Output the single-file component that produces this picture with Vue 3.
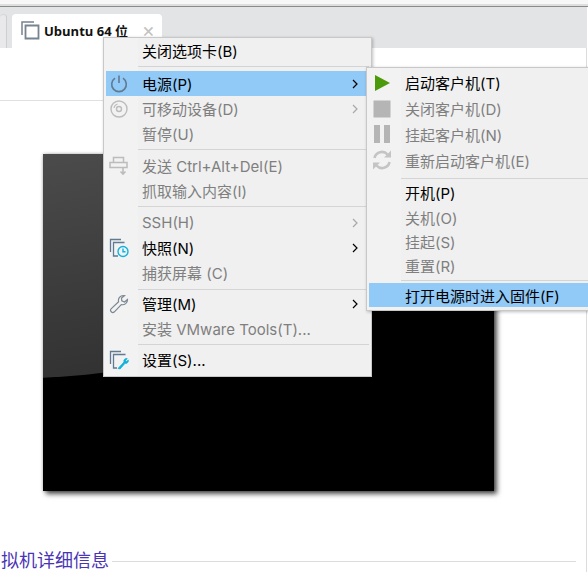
<template>
  <div class="page">
    <div class="top-strip"></div>
    <div class="tabbar">
      <div class="tab tab-prev"></div>
      <div class="tab tab-active">
        <svg class="tab-icon" viewBox="0 0 20 20">
          <path v-for="(p, i) in icons.vm" :key="i" :d="p.d" :fill="p.fill || 'none'" :stroke="p.stroke" :stroke-width="p.w" />
        </svg>
        <span class="tab-title">Ubuntu 64 位</span>
        <span class="tab-close">&times;</span>
      </div>
    </div>
    <div class="content">
      <div class="toolbar"></div>
      <div class="screen"><div class="screen-glow"></div></div>
      <div class="details">
        <span class="details-title">拟机详细信息</span>
        <span class="details-line"></span>
      </div>
    </div>

    <div class="menu main-menu">
      <template v-for="(item, i) in mainItems" :key="i">
        <div v-if="item.sep" class="sep" :class="item.sep"></div>
        <div v-else class="row" :class="{ disabled: item.off, active: item.active }">
          <span class="ico">
            <svg v-if="item.icon" viewBox="0 0 20 20" width="20" height="20">
              <path v-for="(p, k) in icons[item.icon]" :key="k" :d="p.d" :fill="p.fill || 'none'" :stroke="p.stroke" :stroke-width="p.w" />
            </svg>
          </span>
          <span class="label">{{ item.text }}</span>
          <svg v-if="item.arrow" class="arrow" viewBox="0 0 6 10" width="6" height="10">
            <path d="M1 1l4 4-4 4" fill="none" stroke="currentColor" stroke-width="1.2" />
          </svg>
        </div>
      </template>
    </div>

    <div class="menu sub-menu">
      <div v-for="item in powerItems" :key="item.text" class="row tall" :class="{ disabled: item.off }">
        <span class="ico">
          <svg viewBox="0 0 20 20" width="20" height="20">
            <path v-for="(p, k) in icons[item.icon]" :key="k" :d="p.d" :fill="p.fill || 'none'" :stroke="p.stroke" :stroke-width="p.w" />
          </svg>
        </span>
        <span class="label">{{ item.text }}</span>
      </div>
      <div class="sep sep-wide"></div>
      <div v-for="item in bootItems" :key="item.text" class="row compact" :class="{ disabled: item.off }">
        <span class="ico"></span>
        <span class="label">{{ item.text }}</span>
      </div>
      <div class="sep sep-tight"></div>
      <div class="row compact active">
        <span class="ico"></span>
        <span class="label">打开电源时进入固件(F)</span>
      </div>
    </div>
  </div>
</template>

<script setup>
const slate = '#5f7a92'
const cyan = '#12b2dc'
const grey = '#bcbcbc'

const icons = {
  vm: [
    { d: 'M14 2H2v13', stroke: '#77838f', w: 1.5 },
    { d: 'M5.5 5.5H18.5V18.5H5.5z', stroke: '#77838f', w: 1.8 }
  ],
  power: [
    { d: 'M6 4.2a7.3 7.3 0 1 0 8 0', stroke: slate, w: 1.6 },
    { d: 'M10 1.5v7.5', stroke: slate, w: 1.6 }
  ],
  disc: [
    { d: 'M10 2a8 8 0 1 0 0 16a8 8 0 1 0 0-16z', stroke: grey, w: 1.4 },
    { d: 'M10 7.5a2.5 2.5 0 1 0 0 5a2.5 2.5 0 1 0 0-5z', stroke: grey, w: 1.4 },
    { d: 'M5 9a5 5 0 0 1 3.5-4', stroke: grey, w: 1.2 }
  ],
  keys: [
    { d: 'M4.5 1.5h10v5h-10zM1 6.5h17v5H1z', stroke: grey, w: 1.5 },
    { d: 'M14 11.5v6M11.5 15.5l2.5 2.5 2.5-2.5', stroke: grey, w: 1.6 }
  ],
  snapshot: [
    { d: 'M12 1.5H1.5V14', stroke: slate, w: 1.3 },
    { d: 'M15.5 4.5H4.5V18H9', stroke: slate, w: 1.3 },
    { d: 'M14 8.5a5 5 0 1 0 0 10a5 5 0 1 0 0-10zM14 10.5v3.2h2.5', stroke: cyan, w: 1.4 }
  ],
  wrench: [
    { d: 'M14.5 1.5A5 5 0 0 0 9.6 7.8L2.3 14.6A2.2 2.2 0 0 0 5.4 17.8L12.3 10.6A5 5 0 0 0 18.5 5.5L15.5 8L12.8 6.8L12.5 4L15.5 1.6Z', stroke: '#7b8792', w: 1.2 }
  ],
  settings: [
    { d: 'M12 1.5H1.5V14', stroke: slate, w: 1.3 },
    { d: 'M16.5 4.5H4.5V18H8', stroke: slate, w: 1.3 },
    { d: 'M9 18.5l6-6.5a2.6 2.6 0 0 1 3.2-3.4l-1.6 1.8 1 1.2 1.7-1.5a2.6 2.6 0 0 1-3.2 3.2l-5 5.6z', fill: cyan, stroke: cyan, w: 0.8 }
  ],
  play: [{ d: 'M3 2l15 8-15 8z', fill: '#4b9a0a' }],
  stop: [{ d: 'M1.5 1.5h17v17h-17z', fill: '#b5b5b5' }],
  pause: [{ d: 'M2 1h6v18H2zM12 1h6v18h-6z', fill: '#b5b5b5' }],
  restart: [
    { d: 'M2.5 8a7.5 7.5 0 0 1 13-3.5', stroke: '#c4c4c4', w: 2.6 },
    { d: 'M17.5 12a7.5 7.5 0 0 1-13 3.5', stroke: '#c4c4c4', w: 2.6 },
    { d: 'M12 7.5h7v-7zM8 12.5H1v7z', fill: '#c4c4c4' }
  ]
}

const mainItems = [
  { text: '关闭选项卡(B)' },
  { sep: 'sep-loose' },
  { text: '电源(P)', icon: 'power', arrow: true, active: true },
  { text: '可移动设备(D)', icon: 'disc', arrow: true, off: true },
  { text: '暂停(U)', off: true },
  { sep: 'sep-normal' },
  { text: '发送 Ctrl+Alt+Del(E)', icon: 'keys', off: true },
  { text: '抓取输入内容(I)', off: true },
  { sep: 'sep-normal' },
  { text: 'SSH(H)', arrow: true, off: true },
  { text: '快照(N)', icon: 'snapshot', arrow: true },
  { text: '捕获屏幕 (C)', off: true },
  { sep: 'sep-snug' },
  { text: '管理(M)', icon: 'wrench', arrow: true },
  { text: '安装 VMware Tools(T)...', off: true },
  { sep: 'sep-snug' },
  { text: '设置(S)...', icon: 'settings' }
]

const powerItems = [
  { text: '启动客户机(T)', icon: 'play' },
  { text: '关闭客户机(D)', icon: 'stop', off: true },
  { text: '挂起客户机(N)', icon: 'pause', off: true },
  { text: '重新启动客户机(E)', icon: 'restart', off: true }
]

const bootItems = [
  { text: '开机(P)' },
  { text: '关机(O)', off: true },
  { text: '挂起(S)', off: true },
  { text: '重置(R)', off: true }
]
</script>

<style>
html, body {
  margin: 0;
  background: #fff;
}
</style>

<style scoped>
.page {
  position: relative;
  width: 588px;
  height: 572px;
  overflow: hidden;
  background: #fff;
  font-family: "Inter", "Noto Sans CJK SC", sans-serif;
}

.top-strip {
  height: 6px;
  background: linear-gradient(#f7f7f7 0, #f7f7f7 4px, #dedede 4px, #dedede 6px);
  border-bottom: 1px solid #8a8a8a;
}

.tabbar {
  height: 41px;
  margin-right: 1px;
  padding-top: 7px;
  box-sizing: border-box;
  display: flex;
  gap: 5px;
  background: #e3e4e6;
}

.tab {
  border-radius: 4px 4px 0 0;
}

.tab-prev {
  width: 7px;
  border-right: 1px solid #cfcfd2;
  box-sizing: border-box;
  background: #e9e9eb;
  border-top: 1px solid #d6d6d8;
}

.tab-active {
  width: 150px;
  display: flex;
  align-items: center;
  padding: 0 7px 2px 8px;
  box-sizing: border-box;
  background: #fff;
}

.tab-icon {
  width: 20px;
  height: 20px;
  flex: none;
  margin-right: 4px;
}

.tab-title {
  flex: 1;
  font-family: "Open Sans", "Noto Sans CJK SC", sans-serif;
  font-size: 13px;
  font-weight: 700;
  color: #111;
  white-space: nowrap;
}

.tab-close {
  font-size: 20px;
  line-height: 1;
  color: #c2c2c2;
}

.content {
  height: 524px;
  margin-right: 1px;
  border-right: 1px solid #dcdcdc;
  box-sizing: border-box;
}

.toolbar {
  height: 53px;
  border-bottom: 1px solid #e0e0e0;
  box-sizing: border-box;
}

.screen {
  width: 451px;
  height: 337px;
  margin: 53px 0 0 43px;
  background: #000;
  box-shadow: 3px 3px 5px rgba(0, 0, 0, 0.7), 0 0 3px rgba(0, 0, 0, 0.25);
  overflow: hidden;
}

.screen-glow {
  height: 225px;
  clip-path: ellipse(100% 100% at -10% 0);
  background: linear-gradient(170deg, #4b4b4b, #2a2a2a);
}

.details {
  display: flex;
  align-items: center;
  margin-top: 58px;
  padding: 0 10px 0 1px;
}

.details-title {
  font-size: 18px;
  line-height: 24px;
  color: #4a35b5;
  white-space: nowrap;
}

.details-line {
  flex: 1;
  height: 1px;
  margin-left: 3px;
  background: #dcdcdc;
}

.menu {
  position: absolute;
  padding: 0 2px 2px;
  box-sizing: border-box;
  border: 1px solid #c8c8c8;
  background: linear-gradient(90deg, #f2f2f2 34px, #f0f0f0 34px);
  box-shadow: 1px 1px 3px rgba(0, 0, 0, 0.25);
  color: #000;
  font-size: 15px;
}

.main-menu {
  left: 103px;
  top: 37px;
  width: 269px;
  height: 340px;
}

.sub-menu {
  left: 366px;
  top: 67px;
  width: 230px;
  height: 244px;
  padding: 2px 0 0 2px;
}

.row {
  position: relative;
  display: flex;
  align-items: center;
  height: 25.1px;
  white-space: nowrap;
}

.row.tall {
  height: 25.8px;
}

.row.compact {
  height: 24.3px;
}

.row.disabled {
  color: #7f7f7f;
}

.row.active {
  background: #91c9f7;
}

.ico {
  flex: none;
  width: 36px;
  padding-left: 3px;
  box-sizing: border-box;
  display: flex;
}

.label {
  flex: 1;
}

.arrow {
  position: absolute;
  right: 11px;
  top: 8px;
}

.row.disabled .arrow {
  color: #a8a8a8;
}

.sep {
  height: 1px;
  background: #d4d4d4;
  margin: 3px 0 2.9px 32px;
}

.sep-loose {
  margin-bottom: 3.9px;
}

.sep-snug {
  margin-bottom: 1.7px;
}

.sep-wide {
  margin: 4.5px 0 2px 32px;
}

.sep-tight {
  margin: 2px 0 2.2px 32px;
}
</style>
